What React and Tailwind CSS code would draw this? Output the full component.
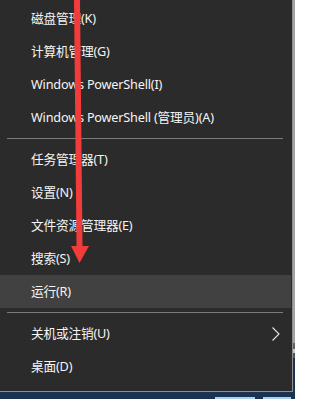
const items1 = ['磁盘管理(K)', '计算机管理(G)', 'Windows PowerShell(I)', 'Windows PowerShell (管理员)(A)'];
const items2 = ['任务管理器(T)', '设置(N)', '文件资源管理器(E)', '搜索(S)', '运行(R)'];

function Row({ label, active, chevron }) {
    return (
        <div className={`h-[33px] mr-[1px] flex items-center justify-between pl-[31px] pr-[10px] ${active ? 'bg-[#414141]' : ''}`}>
            <span>{label}</span>
            {chevron && (
                <svg width="10" height="16" viewBox="0 0 10 16" className="mt-[1px]">
                    <polyline points="1.5,1.5 8,8 1.5,14.5" fill="none" stroke="#e6e6e6" strokeWidth="1.1" />
                </svg>
            )}
        </div>
    );
}

function Separator() {
    return (
        <div className="h-[9px] flex items-center pl-[7px] pr-[9px]">
            <div className="h-px w-full bg-[#7b7b7b]" />
        </div>
    );
}

export default function App() {
    return (
        <div className="relative w-[295px] h-[399px] overflow-hidden bg-[#1b3350]" style={{ fontFamily: '"Noto Sans", "Noto Sans CJK SC", sans-serif' }}>
            <div className="flex">
                <div className="w-[293px] h-[392px] bg-[#2b2b2b] border-r border-b border-[#8f8f8f] pt-[2px] text-[12.7px] text-[#f5f5f5] tracking-[-0.2px]">
                    {items1.map((t) => <Row key={t} label={t} />)}
                    <Separator />
                    {items2.map((t) => <Row key={t} label={t} active={t === '运行(R)'} />)}
                    <Separator />
                    <Row label="关机或注销(U)" chevron />
                    <Row label="桌面(D)" />
                </div>
                <div className="flex-1 flex flex-col">
                    <div className="h-[343px] bg-[#a3a3a3]" />
                    <div className="h-[6px] bg-[#5d6470]" />
                    <div className="h-[4px] bg-[#c8c8c8]" />
                    <div className="h-[5px] bg-[#4a5566]" />
                </div>
            </div>
            <div className="flex h-[7px]">
                <div className="w-[215px]" />
                <div className="w-[40px] mt-[5px] bg-[#a9d2f2]" />
                <div className="w-[8px]" />
                <div className="w-[28px] mt-[5px] bg-[#a9d2f2]" />
            </div>
            <svg className="absolute left-0 top-0" width="295" height="399" viewBox="0 0 295 399">
                <polygon points="74,0 80,0 82.5,246 89,246 79.5,263 71,246 76.5,246" fill="#f23b3b" />
            </svg>
        </div>
    );
}
